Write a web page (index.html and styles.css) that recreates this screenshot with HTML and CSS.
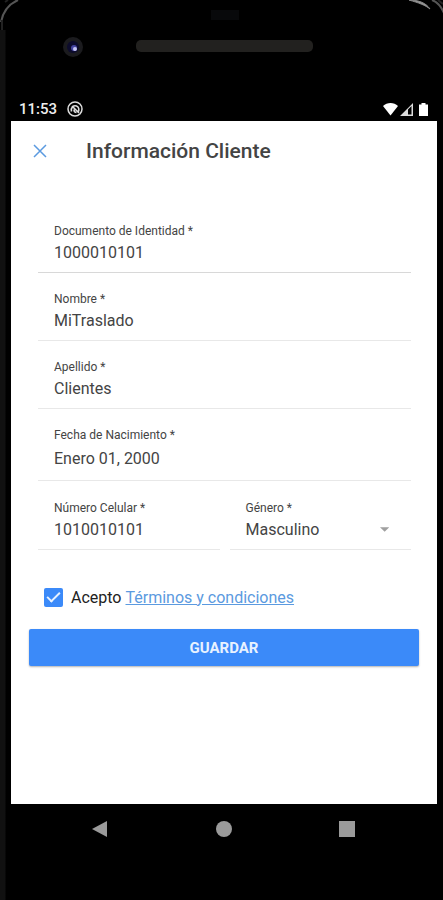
FILE: index.html
```html
<!doctype html>
<html lang="es">
  <head>
    <meta charset="utf-8">
    <meta name="viewport" content="width=device-width, initial-scale=1">
    <title>Información Cliente</title>
    <link rel="stylesheet" href="styles.css">
  </head>
  <body>
    <div class="phone">
      <svg class="corner corner-left" viewBox="0 0 30 30" aria-hidden="true">
        <path d="M1 22 C3 11 9 4 18 0"></path>
        <path class="dim" d="M5 2 L8 0 M2 30 V20"></path>
      </svg>
      <svg class="corner corner-right" viewBox="0 0 40 30" aria-hidden="true">
        <path class="bright" d="M6 0 C16 0 23 3 27 9 C22 5 16 3 6 0 Z"></path>
        <path d="M29 0 C34 2 38 6 41 13"></path>
        <path class="dim" d="M35 0 L40 4"></path>
      </svg>

      <div class="bezel">
        <div class="sensor"></div>
        <div class="camera">
          <svg viewBox="0 0 20 20" aria-hidden="true">
            <circle cx="10" cy="10" r="10" fill="#1b1b1e"></circle>
            <circle cx="10" cy="10" r="6" fill="#0c0b2c"></circle>
            <circle cx="11" cy="11" r="3" fill="#4444a0"></circle>
            <circle cx="12" cy="12" r="2" fill="#c5c5f4"></circle>
          </svg>
        </div>
        <div class="speaker"></div>
      </div>

      <div class="status">
        <span>11:53</span>
        <svg width="16" height="16" viewBox="0 0 16 16" fill="none" stroke="#ddd" aria-hidden="true">
          <circle cx="8" cy="8" r="7" stroke-width="1.5"></circle>
          <path d="M4.5 10.5 C3.5 6.5 6.5 4 9.5 5 C12 6 12.5 9 11 11 M5 5 L12 12 M7 8.5 C7 10.5 8 11.5 9.5 11.5" stroke-width="1.6"></path>
        </svg>
        <svg class="signal" width="46" height="15" viewBox="0 0 46 15" fill="#fff" aria-hidden="true">
          <path d="M0 4 C4 0 11 0 15 4 L7.5 13.5 Z"></path>
          <path d="M17 14 L30 1 V14 Z M25 7.5 V12.5 H28.5 V4 Z" fill-rule="evenodd" fill="#ddd"></path>
          <path d="M36 2.5 H38.5 V1 H42.5 V2.5 H45 V14 H36 Z"></path>
        </svg>
      </div>

      <main class="screen">
        <header class="toolbar">
          <button type="button" class="close" aria-label="Cerrar">
            <svg width="14" height="14" viewBox="0 0 14 14" aria-hidden="true">
              <path d="M1 1 L13 13 M13 1 L1 13"></path>
            </svg>
          </button>
          <h1>Información Cliente</h1>
        </header>

        <form>
          <div class="fields">
            <div class="field first">
              <label for="documento">Documento de Identidad *</label>
              <input type="text" id="documento" value="1000010101">
            </div>
            <div class="field">
              <label for="nombre">Nombre *</label>
              <input type="text" id="nombre" value="MiTraslado">
            </div>
            <div class="field">
              <label for="apellido">Apellido *</label>
              <input type="text" id="apellido" value="Clientes">
            </div>
            <div class="field">
              <label for="nacimiento">Fecha de Nacimiento *</label>
              <input type="text" id="nacimiento" class="date" value="Enero 01, 2000">
            </div>
            <div class="pair">
              <div class="field">
                <label for="celular">Número Celular *</label>
                <input type="tel" id="celular" value="1010010101">
              </div>
              <div class="field">
                <label for="genero">Género *</label>
                <div class="select">
                  <select id="genero">
                    <option>Masculino</option>
                    <option>Femenino</option>
                  </select>
                  <svg width="10" height="5" viewBox="0 0 10 5" aria-hidden="true">
                    <path d="M0 0 H10 L5 5 Z" fill="#a0a0a0"></path>
                  </svg>
                </div>
              </div>
            </div>
          </div>

          <div class="terms">
            <input type="checkbox" id="acepto" checked>
            <label for="acepto">Acepto</label>
            <a href="#">Términos y condiciones</a>
          </div>

          <button type="submit" class="save">GUARDAR</button>
        </form>
      </main>

      <nav class="nav">
        <button type="button" aria-label="Atrás">
          <svg width="16" height="18" viewBox="0 0 16 18"><path d="M15 1 V17 L0 9 Z"></path></svg>
        </button>
        <button type="button" aria-label="Inicio">
          <svg width="16" height="18" viewBox="0 0 16 18"><circle cx="8" cy="9" r="8"></circle></svg>
        </button>
        <button type="button" aria-label="Recientes">
          <svg width="16" height="18" viewBox="0 0 16 18"><path d="M0 1 H16 V17 H0 Z"></path></svg>
        </button>
      </nav>
    </div>
  </body>
</html>
```

FILE: styles.css
```css
html {
  box-sizing: border-box;
}

*, *:before, *:after {
  box-sizing: inherit;
}

body {
  background: #000;
  color: #444;
  font-family: Roboto, sans-serif;
  font-size: 16px;
  margin: 0;
}

button, input, select {
  background: none;
  border: none;
  color: inherit;
  font: inherit;
  margin: 0;
  padding: 0;
}

button {
  cursor: pointer;
}

svg {
  display: block;
}

.phone {
  background: linear-gradient(to right, #111 5px, #000 6px);
  display: flex;
  flex-direction: column;
  min-height: 100vh;
  padding: 0 6px 0 11px;
  position: relative;
}

.corner {
  fill: none;
  height: 30px;
  position: absolute;
  stroke: #555;
  stroke-width: 2;
  top: 0;
}

.corner .dim {
  stroke: #222;
}

.corner .bright {
  fill: #999;
  stroke: #888;
  stroke-width: 1;
}

.corner-left {
  background: #000;
  left: 0;
  width: 30px;
}

.corner-right {
  right: 0;
  width: 40px;
}

/* camera, sensor and speaker above the screen */
.bezel {
  align-items: center;
  column-gap: 53px;
  display: grid;
  grid-template-columns: 20px 177px;
  grid-template-rows: 10px 20px;
  padding: 10px 0 0 52px;
  row-gap: 17px;
}

.sensor {
  background: #08090b;
  grid-column: 2;
  height: 10px;
  justify-self: center;
  width: 28px;
}

.speaker {
  background: #22211f;
  border-radius: 5px;
  height: 12px;
  margin-bottom: 3px;
}

.status {
  align-items: center;
  color: #eee;
  display: flex;
  font-size: 15px;
  font-weight: 500;
  gap: 10px;
  height: 24px;
  margin-top: 40px;
  padding: 0 8px;
}

.signal {
  margin-left: auto;
}

.screen {
  background: #fff;
  flex: 1;
}

.toolbar {
  align-items: center;
  display: flex;
  height: 59px;
  padding-left: 22px;
}

.toolbar h1 {
  font-size: 21px;
  font-weight: 500;
  margin: 0 0 0 39px;
}

.close path {
  fill: none;
  stroke: #5b9ae0;
  stroke-width: 1.5;
}

form {
  padding: 25px 18px;
}

.fields {
  padding: 0 8px 0 9px;
}

.field {
  border-bottom: 1px solid #e8e8e8;
  padding: 18px 16px 7px;
}

.first {
  border-color: #d8d8d8;
}

.field label {
  display: block;
  font-size: 12px;
  line-height: 16px;
}

.field input,
.field select {
  appearance: none;
  display: block;
  height: 26px;
  outline: none;
  width: 100%;
}

.field .date {
  height: 30px;
}

.pair {
  display: grid;
  gap: 10px;
  grid-template-columns: 1fr 1fr;
}

.pair .field {
  padding-top: 19px;
}

.select {
  align-items: center;
  display: flex;
  padding-right: 6px;
}

.terms {
  align-items: center;
  display: flex;
  gap: 4px;
  height: 38px;
  margin-top: 28px;
  padding-left: 15px;
}

.terms input {
  appearance: none;
  background: #3b8af9;
  border-radius: 2px;
  display: grid;
  height: 19px;
  margin-right: 4px;
  place-items: center;
  width: 19px;
}

.terms input:checked:after {
  border: solid #e8f2ff;
  border-width: 0 2px 2px 0;
  content: "";
  height: 13px;
  margin-bottom: 4px;
  transform: rotate(45deg);
  width: 7px;
}

.terms label {
  color: #222;
}

.terms a {
  color: #5b9ae0;
}

.save {
  background: #3b8af9;
  border-radius: 2px;
  box-shadow: 0 1px 2px rgba(0, 0, 0, 0.3);
  color: #e8f2ff;
  display: block;
  font-size: 15px;
  font-weight: 700;
  height: 37px;
  margin-top: 13px;
  width: 100%;
}

.nav {
  display: flex;
  height: 96px;
  padding: 16px 28px 0 27px;
}

.nav button {
  align-self: flex-start;
  display: flex;
  flex: 1;
  justify-content: center;
}

.nav svg {
  fill: #9a9a9a;
}
```
